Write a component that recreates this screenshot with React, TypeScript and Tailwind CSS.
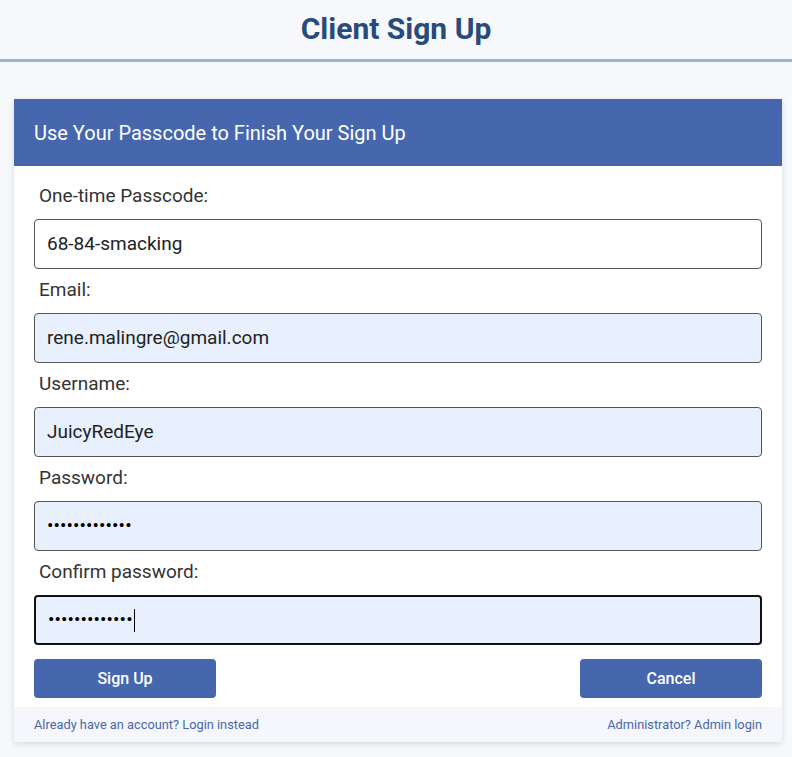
import React from "react";

type Field = {
  label: string;
  value: string;
  filled?: boolean;
  secret?: boolean;
  focused?: boolean;
};

const fields: Field[] = [
  { label: "One-time Passcode:", value: "68-84-smacking" },
  { label: "Email:", value: "rene.malingre@gmail.com", filled: true },
  { label: "Username:", value: "JuicyRedEye", filled: true },
  { label: "Password:", value: "•••••••••••••", filled: true, secret: true },
  { label: "Confirm password:", value: "•••••••••••••", filled: true, secret: true, focused: true },
];

function InputBox({ field }: { field: Field }) {
  const base = "h-[50px] rounded-[4px] flex items-center text-[19px] text-[#222]";
  const border = field.focused
    ? "border-2 border-[#111] pl-[12px]"
    : "border border-[#555] pl-[12px]";
  const bg = field.filled ? "bg-[#e8f0fe]" : "bg-white";
  return (
    <div className={`${base} ${border} ${bg}`}>
      <span className={field.secret ? "tracking-[0.1px] text-[19px] text-black" : ""}>{field.value}</span>
      {field.focused && <span className="ml-[1px] w-px h-[23px] bg-black inline-block" />}
    </div>
  );
}

export default function App() {
  return (
    <div className="min-h-[757px] bg-[#f7f8fc] font-['Roboto',_'Liberation_Sans',_sans-serif]">
      <header className="h-[62px] border-b-[3px] border-[#98b8cf] flex items-center justify-center">
        <h1 className="text-[30px] font-bold text-[#274b7a] leading-none -mt-[2px]">Client Sign Up</h1>
      </header>

      <div className="pt-[37px] pl-[14px]">
        <div className="w-[768px] bg-white shadow-[0_2px_6px_rgba(0,0,0,0.12)]">
          <div className="h-[67px] bg-[#4667ae] flex items-center px-[20px]">
            <h2 className="text-[20px] text-white">Use Your Passcode to Finish Your Sign Up</h2>
          </div>

          <div className="px-[20px] pt-[9px]">
            {fields.map((f) => (
              <div key={f.label}>
                <div className="pt-[10px] pb-[12px] pl-[5px] h-[44px] text-[19px] leading-[22px] text-[#333]">{f.label}</div>
                <InputBox field={f} />
              </div>
            ))}
            <div className="flex justify-between pt-[14px] pb-[9px]">
              <button className="w-[182px] h-[39px] rounded-[4px] bg-[#4667ae] text-white text-[16px] font-medium">Sign Up</button>
              <button className="w-[182px] h-[39px] rounded-[4px] bg-[#4667ae] text-white text-[16px] font-medium">Cancel</button>
            </div>
          </div>

          <div className="h-[35px] bg-[#f5f7fc] flex items-center justify-between px-[20px] text-[12.8px] text-[#4a66ab]">
            <span>Already have an account? Login instead</span>
            <span>Administrator? Admin login</span>
          </div>
        </div>
      </div>
    </div>
  );
}
